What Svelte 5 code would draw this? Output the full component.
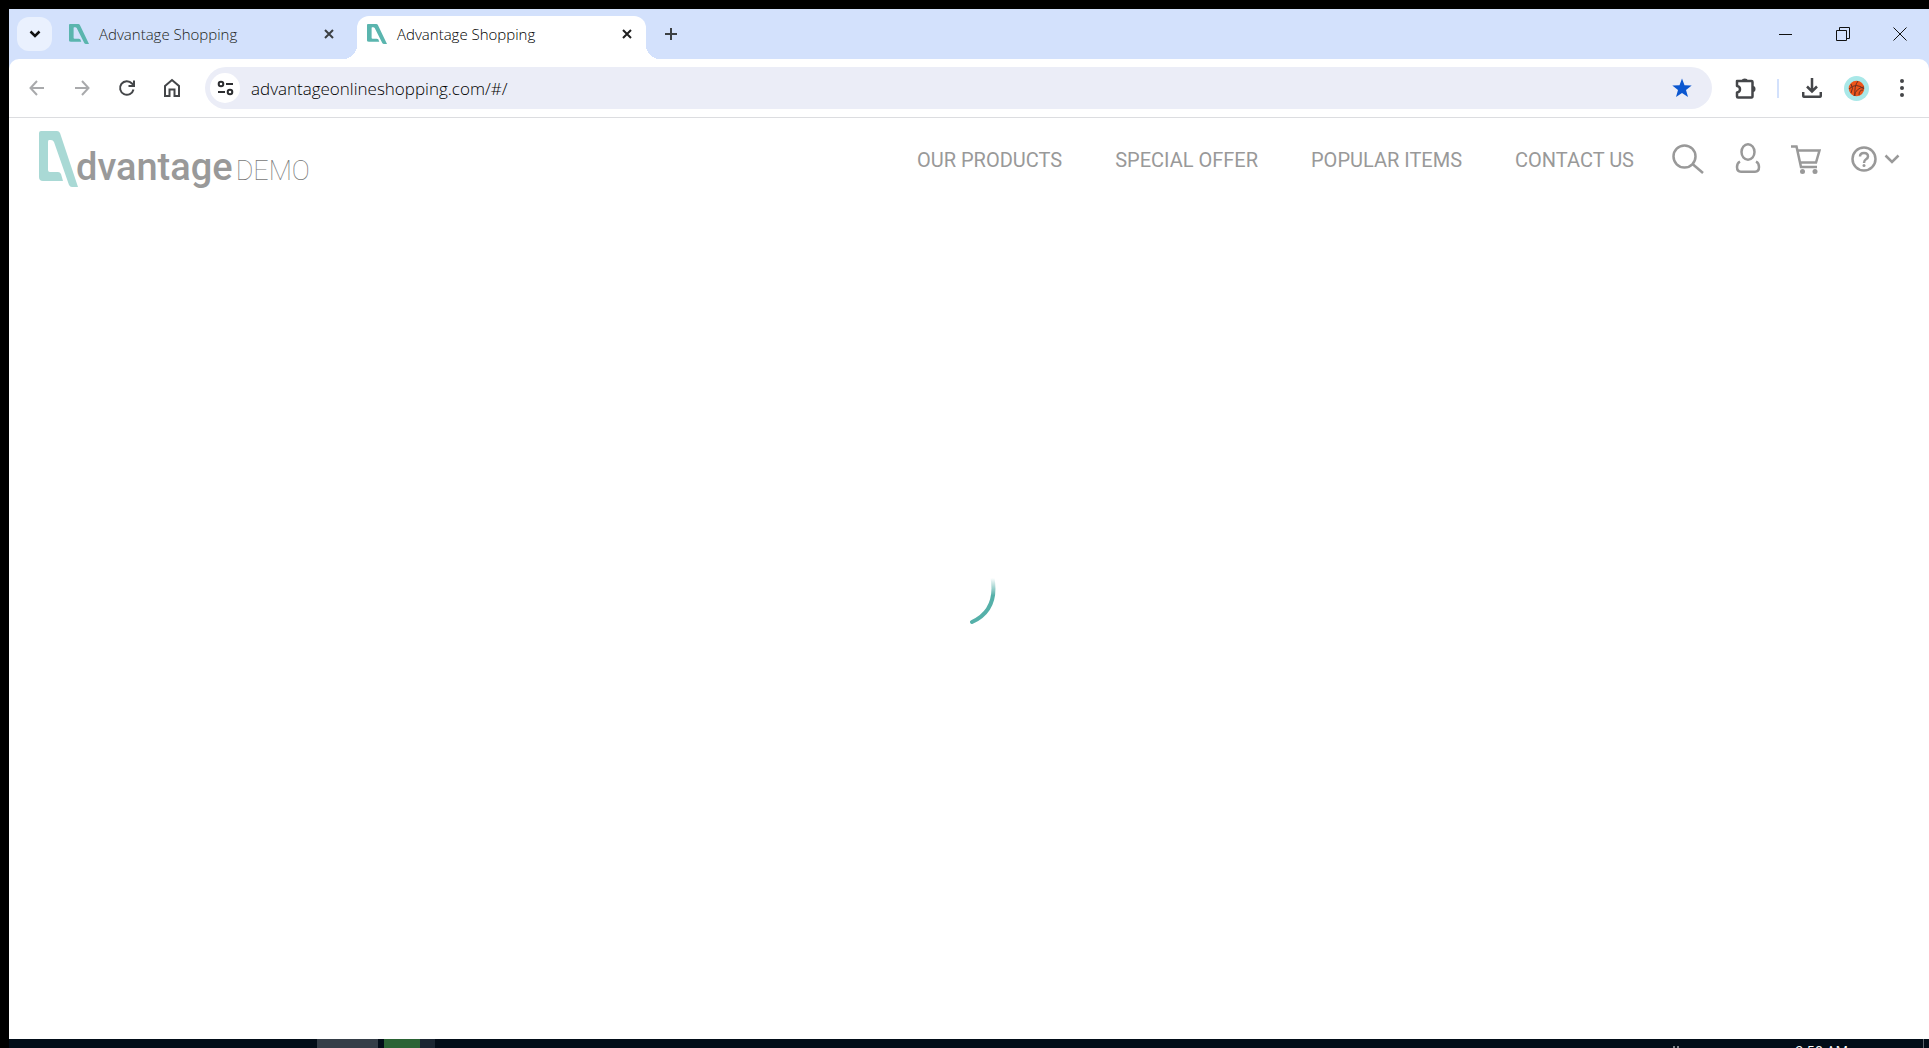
<script>
  const tabs = [
    { title: 'Advantage Shopping', active: false },
    { title: 'Advantage Shopping', active: true }
  ];
  const links = ['OUR PRODUCTS', 'SPECIAL OFFER', 'POPULAR ITEMS', 'CONTACT US'];
  let address = $state('advantageonlineshopping.com/#/');
</script>

{#snippet mark(cls)}
  <svg class={cls} viewBox="0 0 39 56" preserveAspectRatio="none" aria-hidden="true">
    <path d="M2 0H18Q20 0 21 2L39 56H33Q31 56 30 54L15 11Q14 9 12 9H10Q9 9 9 11V39Q9 41 11 41H19Q21 41 22 43L24 50H4Q0 50 0 46V2Q0 0 2 0Z" />
  </svg>
{/snippet}

<div class="screen">
  <div class="browser">
    <div class="strip">
      <button class="search-tabs" aria-label="Search tabs">
        <svg width="12" height="8" viewBox="0 0 12 8" class="line bold"><path d="M1.500 1.500 6 6 10.500 1.500" /></svg>
      </button>
      {#each tabs as tab}
        <div class="tab" class:active={tab.active}>
          {@render mark('favicon')}
          <span class="tab-title">{tab.title}</span>
          <button class="close-tab" aria-label="Close tab">
            <svg width="10" height="10" viewBox="0 0 10 10" class="line"><path d="M1 1 9 9M9 1 1 9" /></svg>
          </button>
        </div>
      {/each}
      <button class="new-tab" aria-label="New tab">
        <svg width="14" height="14" viewBox="0 0 14 14" class="line"><path d="M7 1V13M1 7H13" /></svg>
      </button>
      <div class="window-controls">
        <button aria-label="Minimize"><svg width="14" height="14" viewBox="0 0 14 14" class="hair"><path d="M0 7.500H13" /></svg></button>
        <button aria-label="Restore"><svg width="14" height="14" viewBox="0 0 14 14" class="hair"><path d="M.5 3.500H10.500V13.500H.5ZM3.500 3.500V.5H13.500V11.500H10.500" /></svg></button>
        <button aria-label="Close"><svg width="14" height="14" viewBox="0 0 14 14" class="hair"><path d="M.5 .5 13.500 13.500M13.500 .5.5 13.500" /></svg></button>
      </div>
    </div>

    <div class="toolbar">
      <div class="navigation">
        <button class="muted" aria-label="Back"><svg width="16" height="16" viewBox="0 0 16 16" class="line"><path d="M15 8H2M8 1 1.500 8 8 15" /></svg></button>
        <button class="muted" aria-label="Forward"><svg width="16" height="16" viewBox="0 0 16 16" class="line"><path d="M1 8H14M8 1 14.500 8 8 15" /></svg></button>
        <button aria-label="Reload"><svg width="18" height="18" viewBox="0 0 18 18" class="line"><path d="M15.500 10.500A6.800 6.800 0 1 1 14 4.500L16 6.500M16 1.500V7H10.500" /></svg></button>
        <button aria-label="Home"><svg width="18" height="20" viewBox="0 0 18 20" class="line"><path d="M2 8 9 2 16 8V18H11.500V11.500H6.500V18H2Z" /></svg></button>
      </div>
      <div class="address">
        <button class="site-info" aria-label="View site information">
          <svg width="17" height="16" viewBox="0 0 17 16" class="line"><circle cx="4" cy="4" r="2.300" /><path d="M9 4H16M1 12H8" /><circle cx="13" cy="12" r="2.300" /></svg>
        </button>
        <input aria-label="Address" bind:value={address} spellcheck="false" />
        <button class="star" aria-label="Edit bookmark">
          <svg width="20" height="20" viewBox="0 0 20 20"><path d="M10 .5 12.500 7.200 19.700 7.500 14 12 16 19 10 15 4 19 6 12 .3 7.500 7.500 7.200Z" /></svg>
        </button>
      </div>
      <div class="tools">
        <button aria-label="Extensions">
          <svg width="21" height="21" viewBox="0 0 21 21"><path class="outline" d="M2 3H16.500Q17.500 3 17.500 4V18Q17.500 19.500 16.500 19.500H3Q2 19.500 2 18.500V14.500Q5 14 5 11.200T2 8Z" /><path d="M6.500 3A3.300 3 0 0 1 13 3ZM18 8A2.500 3 0 0 1 18 14Z" /></svg>
        </button>
        <span class="divider"></span>
        <button aria-label="Downloads"><svg width="20" height="20" viewBox="0 0 20 20" class="line bold"><path d="M10 0V13M5 8.500 10 13.500 15 8.500M1.200 14V17.500Q1.200 18.800 2.500 18.800H17.500Q18.800 18.800 18.800 17.500V14" /></svg></button>
        <button aria-label="Profile">
          <svg width="25" height="25" viewBox="0 0 25 25"><circle cx="12.500" cy="12.500" r="12.500" fill="#a9e8e8" /><circle cx="12.500" cy="12.500" r="7.800" fill="#ee5519" /><path class="seams" d="M14 5Q10 10 11 20M5 13Q12 6 20 13M7 8Q10 12 7 17M10 20Q12 12 20 11M15 19Q15 14 19 14" /></svg>
        </button>
        <button aria-label="Menu"><svg width="6" height="20" viewBox="0 0 6 20"><circle cx="3" cy="3" r="2" /><circle cx="3" cy="10" r="2" /><circle cx="3" cy="17" r="2" /></svg></button>
      </div>
    </div>

    <div class="page">
      <header>
        <a class="brand" href="#/">
          {@render mark('logo')}
          <span class="words"><span class="name">dvantage</span><span class="demo">DEMO</span></span>
        </a>
        <nav>
          {#each links as link}
            <a href="#/">{link}</a>
          {/each}
        </nav>
        <div class="actions">
          <button aria-label="Search"><svg width="33" height="30" viewBox="0 0 33 30"><circle cx="12.500" cy="12.500" r="11" /><path d="M20.500 20 31 29" /></svg></button>
          <button aria-label="User"><svg width="26" height="32" viewBox="0 0 26 32"><ellipse cx="13" cy="9" rx="6.500" ry="7.700" /><path d="M5 18.500Q2 20 2 24Q2 28.700 6 28.700H20Q24 28.700 24 24Q24 20 21 18.500" /></svg></button>
          <button aria-label="Cart"><svg width="30" height="29" viewBox="0 0 30 29"><path d="M0 1.500H5.500L10 22H26M7 5.500H28.500L25 17.500H9" /><circle class="solid" cx="11.500" cy="26.500" r="2.500" /><circle class="solid" cx="24" cy="26.500" r="2.500" /></svg></button>
          <button class="help" aria-label="Help">
            <svg width="26" height="26" viewBox="0 0 26 26"><circle cx="13" cy="13" r="11.500" /><path d="M9 10.500Q9 7 13 7T17 10.500Q17 12 15 13.200T13 17" /><circle class="solid" cx="13" cy="19.500" r="1.500" /></svg>
            <svg width="16" height="10" viewBox="0 0 16 10"><path d="M1.500 1.500 8 8 14.500 1.500" /></svg>
          </button>
        </div>
      </header>
      <main>
        <svg class="spinner" width="56" height="50" viewBox="0 0 56 50" role="img" aria-label="Loading">
          <defs><linearGradient id="fade" x1="0" y1="0" x2="0" y2="1"><stop offset="0" stop-color="#55b0a9" stop-opacity="0" /><stop offset=".4" stop-color="#55b0a9" /></linearGradient></defs>
          <path d="M51.500 2Q57 34 31 46" stroke="url(#fade)" />
        </svg>
      </main>
    </div>
  </div>

  <footer>
    <span class="task gray"></span>
    <span class="task green"></span>
    <span class="task slate"></span>
    <svg class="tray" width="8" height="9" viewBox="0 0 8 9"><path d="M1 8H3M5 8H7" /></svg>
    <span class="clock">9:50 AM</span>
    <span class="edge"></span>
  </footer>
</div>

<style>
  :global(body) { margin: 0; background: #000; }
  .screen {
    box-sizing: border-box;
    height: 100vh;
    padding: 9px 0 0 9px;
    display: flex;
    flex-direction: column;
    overflow: hidden;
    background: #000;
    font-family: "Open Sans", "Noto Sans", sans-serif;
  }
  button {
    display: flex;
    align-items: center;
    justify-content: center;
    padding: 0;
    border: 0;
    background: none;
    color: inherit;
    font: inherit;
  }
  svg { display: block; flex: none; }
  .line { fill: none; stroke: currentColor; stroke-width: 2; }
  .bold { stroke-width: 2.500; }
  .hair { fill: none; stroke: #111; stroke-width: 1; }
  .browser {
    flex: 1;
    min-height: 0;
    display: flex;
    flex-direction: column;
    background: #d3e1fc;
  }

  .strip {
    flex: none;
    height: 50px;
    display: flex;
    align-items: center;
    padding-left: 8px;
    color: #3c4043;
  }
  .search-tabs { width: 35px; height: 34px; border-radius: 12px; background: #eaf1fe; color: #111; }
  .tab {
    box-sizing: border-box;
    width: 289px;
    height: 43px;
    margin-top: 7px;
    padding: 0 9px 7px 10px;
    display: flex;
    align-items: center;
    position: relative;
    border-radius: 12px 12px 0 0;
  }
  .tab:not(.active) { margin-left: 7px; margin-right: 9px; }
  .tab.active { background: #fff; color: #1f1f1f; }
  .tab.active::before,
  .tab.active::after {
    content: "";
    position: absolute;
    bottom: 0;
    width: 14px;
    height: 14px;
  }
  .tab.active::before { right: 100%; background: radial-gradient(circle at 0 0, transparent 14px, #fff 14px); }
  .tab.active::after { left: 100%; background: radial-gradient(circle at 100% 0, transparent 14px, #fff 14px); }
  .favicon { width: 20px; height: 20px; margin-right: 10px; fill: #5ab5ae; }
  .tab-title { flex: 1; color: #1b1d20; font-size: 15px; font-weight: 300; white-space: nowrap; }
  .active .tab-title { color: #000; }
  .close-tab { width: 20px; height: 20px; }
  .new-tab { width: 34px; height: 34px; margin-left: 8px; }
  .window-controls { margin-left: auto; padding-right: 1px; display: flex; }
  .window-controls button { width: 57px; height: 48px; }

  .toolbar {
    flex: none;
    height: 58px;
    display: flex;
    align-items: center;
    border-bottom: 1px solid #dcdde0;
    border-radius: 10px 10px 0 0;
    background: #fff;
    color: #444649;
  }
  .navigation { display: flex; padding: 0 11px 0 5px; }
  .navigation button { width: 45px; height: 40px; }
  .navigation .muted { color: #a9aaac; }
  .address {
    flex: 1;
    height: 42px;
    display: flex;
    align-items: center;
    padding: 0 20px 0 5px;
    border-radius: 21px;
    background: #ebedf7;
  }
  .site-info { width: 30px; height: 30px; border-radius: 50%; background: #fff; color: #2c2d30; }
  input {
    flex: 1;
    min-width: 0;
    padding: 0 0 0 11px;
    border: 0;
    outline: 0;
    background: none;
    color: #000;
    font: 300 17px "Open Sans", "Noto Sans", sans-serif;
  }
  .star { color: #0b57d0; }
  .star svg, .tools svg:not(.line) { fill: currentColor; }
  .tools { display: flex; align-items: center; padding: 0 5px 0 11px; }
  .tools button { width: 45px; height: 40px; }
  .tools .outline { fill: none; stroke: currentColor; stroke-width: 2.500; stroke-linejoin: round; }
  .divider { width: 2px; height: 19px; margin: 0 10px 0 9px; background: #d3e1fc; }
  .tools .seams { fill: none; stroke: #6d3020; stroke-width: 1; }

  .page { flex: 1; min-height: 0; display: flex; flex-direction: column; background: #fff; }
  header {
    height: 82px;
    display: flex;
    align-items: center;
    padding: 0 29px 0 30px;
    font-family: Roboto, sans-serif;
    color: #999;
  }
  .brand { display: flex; align-items: center; color: #999; text-decoration: none; }
  .logo { width: 39px; height: 56px; fill: #a9d9d5; }
  .words { display: flex; align-items: baseline; margin-left: -2px; padding-top: 16px; }
  .name { font-size: 38px; font-weight: 500; }
  .demo { margin-left: 3px; font-size: 27px; font-weight: 100; color: #777; }
  nav { display: flex; gap: 53px; margin-left: auto; padding-top: 2px; }
  nav a { color: #999; font-size: 20px; text-decoration: none; white-space: nowrap; }
  .actions { display: flex; align-items: center; gap: 30px; margin-left: 38px; }
  .actions svg { fill: none; stroke: #999; stroke-width: 2.500; }
  .actions svg .solid { fill: #999; stroke: none; }
  .help { gap: 7px; }
  main { flex: 1; display: flex; justify-content: center; padding-top: 376px; }
  .spinner { fill: none; stroke-width: 4; stroke-linecap: round; }

  footer {
    flex: none;
    height: 9px;
    display: flex;
    overflow: hidden;
    background: #020d18;
    color: #fff;
  }
  .gray { width: 61px; margin-left: 308px; background: #353e48; }
  .green { width: 36px; margin-left: 6px; background: #2b6335; }
  .slate { width: 15px; background: #1b2632; }
  .tray { margin-left: auto; stroke: #fff; stroke-width: 1; }
  .clock { margin: 5px 75px 0 115px; font-size: 14px; line-height: 14px; white-space: nowrap; }
  .edge { width: 1px; margin-right: 5px; background: #5b646d; }
</style>
